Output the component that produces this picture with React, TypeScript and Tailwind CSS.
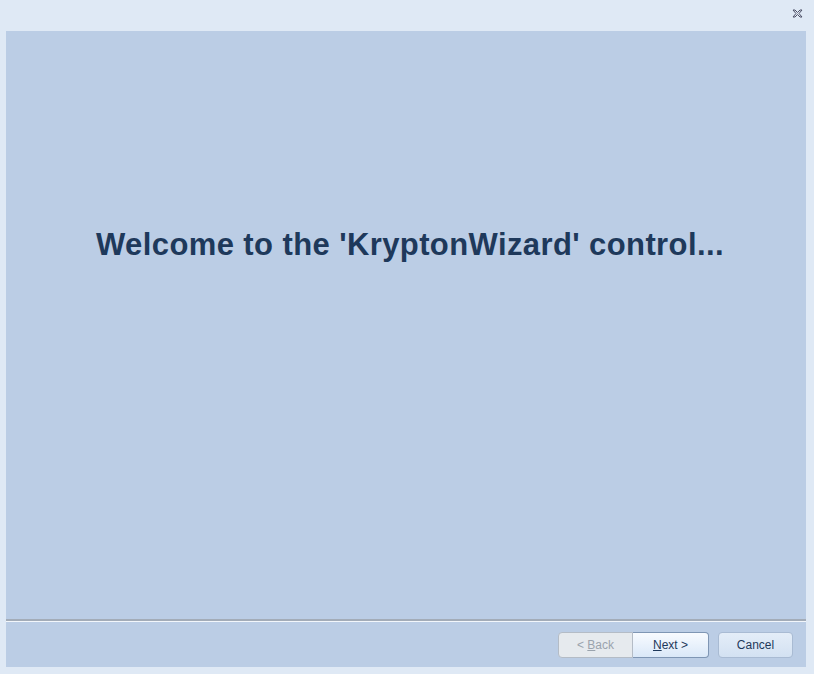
import React from 'react'

function CloseGlyph() {
	return (
		<svg width="11" height="9" viewBox="0 0 11 9" className="block">
			<path
				d="M1 1 L3 1 L5.5 3.5 L8 1 L10 1 L7 4.5 L10 8 L8 8 L5.5 5.5 L3 8 L1 8 L4 4.5 Z"
				fill="#dfe6f0"
				stroke="#4b4f66"
				strokeWidth="1"
				strokeLinejoin="round"
			/>
		</svg>
	)
}

export default function App() {
	return (
		<div
			className="w-[814px] h-[674px] bg-[#dfe9f5] flex flex-col overflow-hidden"
			style={{ fontFamily: '"Liberation Sans", Arial, sans-serif' }}
		>
			<div className="h-[31px] flex items-start justify-end pt-[9px] pr-[11px]">
				<CloseGlyph />
			</div>
			<div className="mx-[6px] w-[800px] h-[636px] bg-[#bbcde5] flex flex-col">
				<div className="h-[588px] flex items-start justify-center pt-[195px] pl-[8px]">
					<h1 className="text-[31px] leading-[37px] font-bold text-[#1e395b] tracking-[0.4px]">
						Welcome to the 'KryptonWizard' control...
					</h1>
				</div>
				<div className="h-[2px] bg-[#a3acb8]" />
				<div className="h-[1px] bg-[#f2f6fb]" />
				<div className="flex-1 flex justify-end items-start pt-[10px] pr-[13px] text-[12px]">
					<div className="flex">
						<button className="w-[75px] h-[26px] rounded-l-[4px] border border-[#b4bcc6] bg-[#e6eaee] text-[#9aa3ad]">
							&lt; <span className="underline">B</span>ack
						</button>
						<button className="w-[76px] h-[26px] rounded-r-[4px] border border-l-0 border-[#7f96b4] bg-gradient-to-b from-[#f8fbff] to-[#dae8f8] text-[#1e395b]">
							<span className="underline">N</span>ext &gt;
						</button>
					</div>
					<button className="ml-[9px] w-[75px] h-[26px] rounded-[4px] border border-[#a9bbd3] bg-gradient-to-b from-[#e4edf8] to-[#d3e1f2] text-[#1e395b]">
						Cancel
					</button>
				</div>
			</div>
		</div>
	)
}
